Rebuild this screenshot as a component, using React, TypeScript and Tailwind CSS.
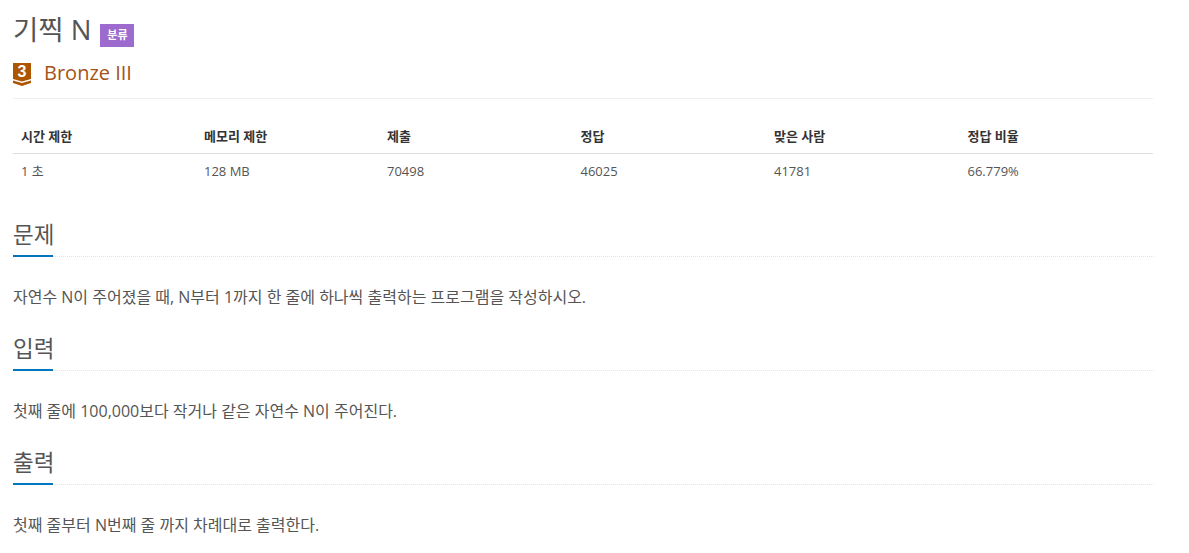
const font = "font-['Open_Sans','Noto_Sans_CJK_KR',sans-serif]";

function Section({ title, text }: { title: string; text: string }) {
  return (
    <section>
      <div className="relative h-[44px] w-[1141px] border-b border-dotted border-[#dfe4f2]">
        <h2 className="pt-[7px] text-[22.5px] leading-[30px] text-[#555555]">{title}</h2>
        <div className="absolute bottom-[-1px] left-0 h-[2px] w-[40px] bg-[#0076c0]" />
      </div>
      <p className="mt-[30px] h-[20px] text-[16px] leading-[20px] text-[#555555]">{text}</p>
    </section>
  );
}

export default function App() {
  const heads = ["시간 제한", "메모리 제한", "제출", "정답", "맞은 사람", "정답 비율"];
  const vals = ["1 초", "128 MB", "70498", "46025", "41781", "66.779%"];
  const cols = "grid grid-cols-[183px_183px_193.5px_193.5px_193.5px_1fr] pl-[8px]";
  return (
    <div className={`${font} min-h-[553px] w-[1189px] overflow-hidden bg-white pl-[13px] text-[#555555]`}>
      <div className="w-[1140px]">
        <div className="flex h-[59px] items-start pt-[11px]">
          <h1 className="text-[27.5px] leading-[38px] text-[#555555]">기찍 N</h1>
          <span className="ml-[9px] mt-[13px] flex h-[23px] w-[34px] items-center justify-center bg-[#9d6bce] text-[11px] font-bold text-white">
            분류
          </span>
        </div>
        <div className="flex h-[40px] items-start border-b border-[#eeeeee]">
          <svg width="18" height="23" viewBox="0 0 18 23" className="mt-[4px] shrink-0 overflow-visible">
            <path d="M0 0H18V16L9 18.5L0 16Z" fill="#ad5600" />
            <path d="M0 17.5L9 20L18 17.5V20L9 23L0 20Z" fill="#ad5600" />
            <text x="9" y="14" textAnchor="middle" fontSize="16" fontWeight="700" fill="#fff" fontFamily="'Liberation Sans',sans-serif">3</text>
          </svg>
          <span className="ml-[13px] text-[20px] leading-[28px] text-[#a5521a]">Bronze III</span>
        </div>
        <div className={`${cols} mt-[21px] h-[34px] items-center border-b border-[#dddddd] text-[13px] font-bold text-[#333333]`}>
          {heads.map((h) => (
            <div key={h}>{h}</div>
          ))}
        </div>
        <div className={`${cols} h-[36px] items-center text-[13px] text-[#555555]`}>
          {vals.map((v) => (
            <div key={v}>{v}</div>
          ))}
        </div>
      </div>
      <div className="mt-[23px] flex flex-col gap-[20px]">
        <Section title="문제" text="자연수 N이 주어졌을 때, N부터 1까지 한 줄에 하나씩 출력하는 프로그램을 작성하시오." />
        <Section title="입력" text="첫째 줄에 100,000보다 작거나 같은 자연수 N이 주어진다." />
        <Section title="출력" text="첫째 줄부터 N번째 줄 까지 차례대로 출력한다." />
      </div>
    </div>
  );
}
